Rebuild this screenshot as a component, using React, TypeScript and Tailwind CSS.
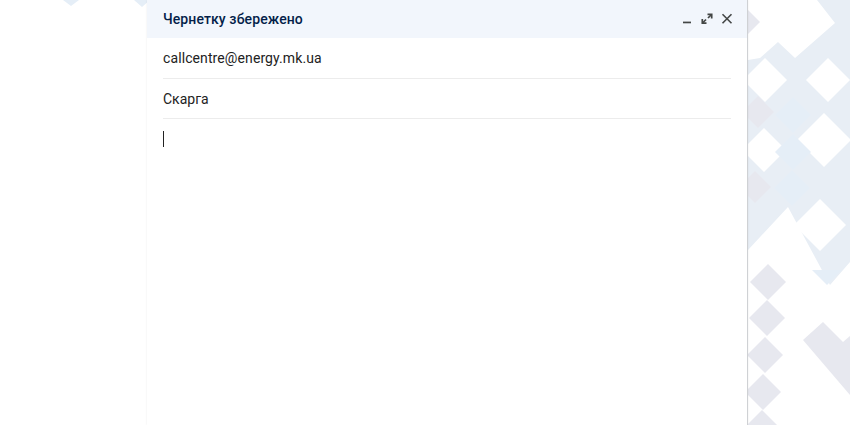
import React from "react";

function Diamond({ cx, cy, r, fill }: { cx: number; cy: number; r: number; fill: string }) {
  return <polygon points={`${cx},${cy - r} ${cx + r},${cy} ${cx},${cy + r} ${cx - r},${cy}`} fill={fill} />;
}

function Pattern() {
  const blue = "#e5eef7";
  const blue2 = "#e8eef5";
  const gray = "#e7e8ef";
  const white = "#ffffff";
  return (
    <svg className="absolute inset-0" width="850" height="425" viewBox="0 0 850 425">
      <polygon points="63,0 79,0 71,6" fill={blue} />
      <polygon points="134,0 150,0 142,7" fill={blue} />
      <polygon
        points="748,60 760,58 778,42 795,58 835,23 817,0 850,0 850,262 830,285 788,207 748,250"
        fill={blue2}
      />
      <Diamond cx={745} cy={22} r={15} fill={gray} />
      <Diamond cx={765} cy={80} r={22} fill={white} />
      <Diamond cx={828} cy={80} r={22} fill={white} />
      <Diamond cx={824} cy={140} r={27} fill={white} />
      <Diamond cx={764} cy={150} r={22} fill={white} />
      <Diamond cx={820} cy={225} r={26} fill={white} />
      <Diamond cx={793} cy={115} r={18} fill={blue} />
      <Diamond cx={793} cy={152} r={18} fill={blue} />
      <Diamond cx={792} cy={188} r={18} fill={blue} />
      <Diamond cx={758} cy={112} r={16} fill={gray} />
      <Diamond cx={755} cy={187} r={16} fill={gray} />
      <polygon points="812,270 842,270 827,285" fill={blue} />
      <Diamond cx={768} cy={282} r={18} fill={gray} />
      <Diamond cx={767} cy={318} r={18} fill={gray} />
      <Diamond cx={765} cy={355} r={18} fill={gray} />
      <Diamond cx={763} cy={392} r={18} fill={gray} />
      <Diamond cx={762} cy={428} r={18} fill={gray} />
      <polygon points="803,340 823,322 843,342 850,336 850,395" fill={gray} />
    </svg>
  );
}

export default function App() {
  const font = { fontFamily: "Roboto, 'Liberation Sans', Arial, sans-serif" };
  return (
    <div className="relative w-[850px] h-[425px] overflow-hidden bg-white" style={font}>
      <Pattern />
      <div className="relative flex h-full pl-[147px]">
        <div className="flex h-full w-[601px] flex-col border-r border-[#cfd1d4] bg-white shadow-[0_0_2px_rgba(0,0,0,0.08)]">
          <div className="flex h-[38px] shrink-0 items-center bg-[#f2f6fc] pl-4 pr-[10px]">
            <span className="flex-1 text-[14px] font-medium tracking-[0.1px] text-[#041e49]">Чернетку збережено</span>
            <div className="flex items-center">
              <svg width="20" height="20" viewBox="0 0 20 20">
                <rect x="6" y="12.6" width="8" height="1.7" fill="#444746" />
              </svg>
              <svg width="20" height="20" viewBox="0 0 20 20" fill="none" stroke="#444746" strokeWidth="1.7">
                <path d="M10.5 5.3H14.7V9.5" />
                <path d="M14.5 5.5L11 9" />
                <path d="M9.5 14.2H5.3V10" />
                <path d="M5.5 14L9 10.5" />
              </svg>
              <svg width="20" height="20" viewBox="0 0 20 20" fill="none" stroke="#444746" strokeWidth="1.6">
                <path d="M5.5 5.2L14.5 14.2M14.5 5.2L5.5 14.2" />
              </svg>
            </div>
          </div>
          <div className="mx-4 flex h-[41px] items-center border-b border-[#ececec] pt-px text-[14px] tracking-[0.1px] text-[#222222]">
            callcentre@energy.mk.ua
          </div>
          <div className="mx-4 flex h-[40px] items-center border-b border-[#ececec] pt-px text-[14px] text-[#222222]">
            Скарга
          </div>
          <div className="mx-4 pt-[12px]">
            <div className="h-[16px] w-px bg-[#222222]" />
          </div>
        </div>
      </div>
    </div>
  );
}
